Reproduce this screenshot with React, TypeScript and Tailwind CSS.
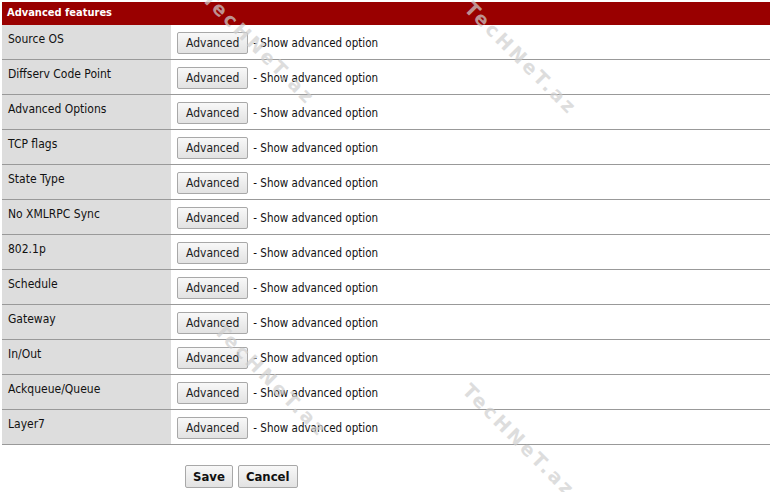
import React from 'react';

const rows = [
  'Source OS',
  'Diffserv Code Point',
  'Advanced Options',
  'TCP flags',
  'State Type',
  'No XMLRPC Sync',
  '802.1p',
  'Schedule',
  'Gateway',
  'In/Out',
  'Ackqueue/Queue',
  'Layer7',
];

const marks = [
  { left: 184, top: 34 },
  { left: 446, top: 44 },
  { left: 196, top: 366 },
  { left: 444, top: 426 },
];

const Watermark: React.FC<{ left: number; top: number }> = ({ left, top }) => (
  <div
    className="absolute pointer-events-none text-[19px] font-bold tracking-[3px] text-[#cfcfcf] opacity-70 rotate-45 whitespace-nowrap"
    style={{ left, top, fontFamily: '"DejaVu Sans", sans-serif' }}
  >
    TecHNeT.az
  </div>
);

export default function App() {
  return (
    <div className="relative w-[772px] h-[492px] bg-white overflow-hidden pt-[2px] px-[2px] text-[12px] text-[#111]" style={{ fontFamily: '"DejaVu Sans Condensed", "DejaVu Sans", sans-serif' }}>
      <div className="w-[768px]">
        <div className="h-[23px] bg-[#990000] text-white font-bold text-[11px] pl-[5px] flex items-center">
          Advanced features
        </div>
        {rows.map((r) => (
          <div key={r} className="flex h-[35px] border-b border-[#999]">
            <div className="w-[169px] bg-[#dddddd] pl-[6px] pt-[5px]">{r}</div>
            <div className="flex-1 flex items-center pl-[6px] pt-[1px]">
              <button className="h-[22px] px-[8px] bg-gradient-to-b from-[#f8f8f8] to-[#e2e2e2] border border-[#a8a8a8] rounded-[2px] text-[12px] text-[#222] leading-none">
                Advanced
              </button>
              <span className="ml-[5px] mt-[2px] text-[11.5px]">- Show advanced option</span>
            </div>
          </div>
        ))}
        <div className="flex gap-[5px] pl-[183px] pt-[20px]">
          <button className="h-[23px] px-[7px] bg-gradient-to-b from-[#f8f8f8] to-[#e2e2e2] border border-[#a8a8a8] rounded-[2px] text-[13px] font-bold leading-none">
            Save
          </button>
          <button className="h-[23px] px-[7px] bg-gradient-to-b from-[#f8f8f8] to-[#e2e2e2] border border-[#a8a8a8] rounded-[2px] text-[13px] font-bold leading-none">
            Cancel
          </button>
        </div>
      </div>
      {marks.map((m, i) => (
        <Watermark key={i} left={m.left} top={m.top} />
      ))}
    </div>
  );
}
